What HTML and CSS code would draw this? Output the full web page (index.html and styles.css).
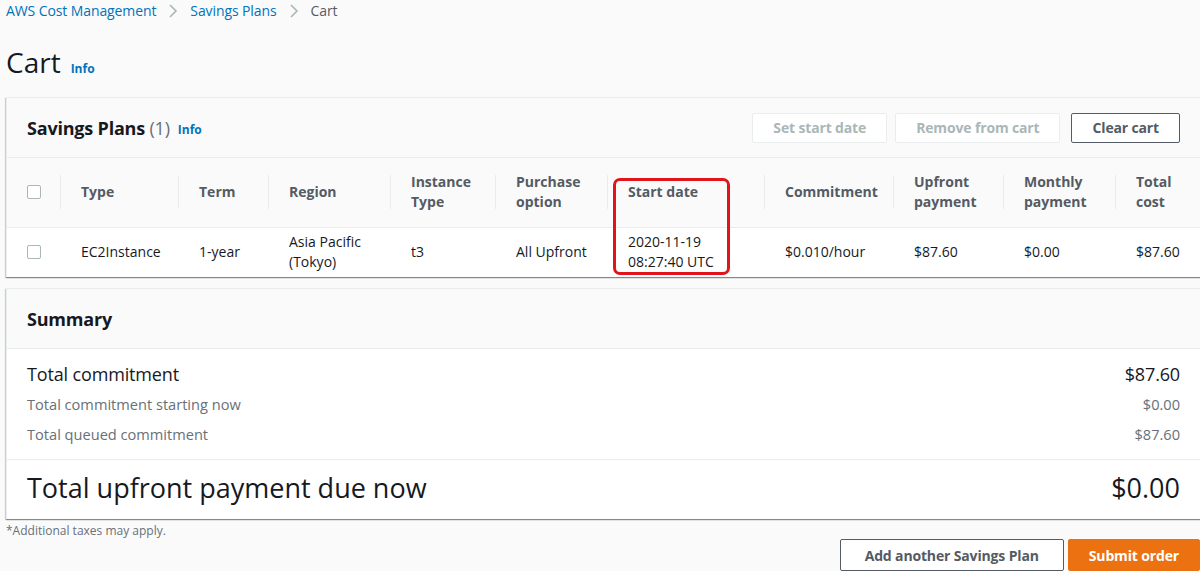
FILE: index.html
```html
<!DOCTYPE html>
<html lang="en">

<head>
    <meta charset="UTF-8">
    <meta name="viewport" content="width=device-width, initial-scale=1.0">
    <title>Cart</title>
    <link rel="stylesheet" href="styles.css">
</head>

<body>
    <main class="page">
        <nav class="breadcrumb">
            <a href="#">AWS Cost Management</a>
            <span class="crumb-sep">
                <svg width="16" height="16" viewBox="0 0 16 16"><path d="M5 2l6 6-6 6" /></svg>
            </span>
            <a href="#">Savings Plans</a>
            <span class="crumb-sep">
                <svg width="16" height="16" viewBox="0 0 16 16"><path d="M5 2l6 6-6 6" /></svg>
            </span>
            <span class="crumb-current">Cart</span>
        </nav>

        <div class="page-title">
            <h1>Cart</h1>
            <a href="#" class="info">Info</a>
        </div>

        <section class="card">
            <div class="card-header">
                <h2>Savings Plans <span class="count">(1)</span></h2>
                <a href="#" class="info">Info</a>
                <div class="actions">
                    <button class="btn" disabled>Set start date</button>
                    <button class="btn" disabled>Remove from cart</button>
                    <button class="btn btn-clear">Clear cart</button>
                </div>
            </div>

            <div class="table-wrap">
                <table class="cart-table">
                    <colgroup>
                        <col style="width: 53px">
                        <col style="width: 118px">
                        <col style="width: 90px">
                        <col style="width: 122px">
                        <col style="width: 105px">
                        <col style="width: 112px">
                        <col style="width: 157px">
                        <col style="width: 129px">
                        <col style="width: 110px">
                        <col style="width: 112px">
                        <col>
                    </colgroup>
                    <thead>
                        <tr>
                            <th><span class="checkbox"></span></th>
                            <th>Type</th>
                            <th>Term</th>
                            <th>Region</th>
                            <th>Instance Type</th>
                            <th>Purchase option</th>
                            <th>Start date</th>
                            <th>Commitment</th>
                            <th>Upfront payment</th>
                            <th>Monthly payment</th>
                            <th>Total cost</th>
                        </tr>
                    </thead>
                    <tbody>
                        <tr>
                            <td><span class="checkbox"></span></td>
                            <td>EC2Instance</td>
                            <td>1-year</td>
                            <td>Asia Pacific (Tokyo)</td>
                            <td>t3</td>
                            <td>All Upfront</td>
                            <td>2020-11-19 08:27:40 UTC</td>
                            <td>$0.010/hour</td>
                            <td>$87.60</td>
                            <td>$0.00</td>
                            <td>$87.60</td>
                        </tr>
                    </tbody>
                </table>
                <div class="highlight"></div>
            </div>
        </section>

        <section class="card summary">
            <div class="card-header">
                <h2>Summary</h2>
            </div>
            <div class="summary-body">
                <div class="summary-row main">
                    <span>Total commitment</span>
                    <span>$87.60</span>
                </div>
                <div class="summary-sub">
                    <div class="summary-row sub">
                        <span>Total commitment starting now</span>
                        <span>$0.00</span>
                    </div>
                    <div class="summary-row sub">
                        <span>Total queued commitment</span>
                        <span>$87.60</span>
                    </div>
                </div>
            </div>
            <div class="summary-total">
                <span>Total upfront payment due now</span>
                <span>$0.00</span>
            </div>
        </section>

        <p class="note">*Additional taxes may apply.</p>

        <div class="footer-actions">
            <button class="btn btn-normal">Add another Savings Plan</button>
            <button class="btn btn-primary">Submit order</button>
        </div>
    </main>
</body>

</html>
```

FILE: styles.css
```css
:root {
    --text: #16191f;
    --text-label: #545b64;
    --text-secondary: #687078;
    --disabled: #aab7b8;
    --border: #eaeded;
    --link: #0073bb;
    --orange: #ec7211;
    --bg: #fafafa;
}

* {
    box-sizing: border-box;
}

html {
    font-family: "Open Sans", "Noto Sans", sans-serif;
    font-size: 14px;
    line-height: 20px;
    color: var(--text);
}

body {
    margin: 0;
    height: 571px;
    overflow: hidden;
    background-color: var(--bg);
}

.page {
    padding-left: 6px;
}

a {
    text-decoration: none;
}

/* breadcrumb */

.breadcrumb {
    display: flex;
    align-items: center;
    height: 22px;
    line-height: 22px;
    letter-spacing: -0.1px;
}

.breadcrumb a {
    color: var(--link);
}

.crumb-sep {
    display: flex;
    width: 34px;
    justify-content: center;
}

.crumb-sep svg {
    fill: none;
    stroke: var(--disabled);
    stroke-width: 1.6;
}

.crumb-current {
    color: var(--text-label);
}

/* title */

.page-title {
    display: flex;
    align-items: baseline;
    gap: 10px;
    margin: 22px 0 17px;
}

.page-title h1 {
    margin: 0;
    font-size: 28px;
    line-height: 36px;
    font-weight: 400;
}

.info {
    font-size: 12px;
    font-weight: 700;
    color: var(--link);
}

/* cards */

.card {
    margin-right: -1px;
    background-color: #fff;
    border: 1px solid var(--border);
    border-bottom: 0;
    box-shadow: 0 1px 1px 0 rgba(0, 28, 36, 0.3), 1px 1px 1px 0 rgba(0, 28, 36, 0.15), -1px 1px 1px 0 rgba(0, 28, 36, 0.15);
}

.card-header {
    display: flex;
    align-items: center;
    gap: 8px;
    height: 60px;
    padding: 0 20px;
    background-color: var(--bg);
    border-bottom: 1px solid var(--border);
}

.card-header h2 {
    margin: 0;
    font-size: 18px;
    line-height: 24px;
    font-weight: 700;
    letter-spacing: -0.2px;
}

.card-header .info {
    margin-top: 4px;
}

.count {
    font-weight: 400;
    color: var(--text-secondary);
}

.actions {
    display: flex;
    gap: 8px;
    margin-left: auto;
}

.actions .btn-clear {
    margin-left: 3px;
}

/* buttons */

.btn {
    height: 30px;
    padding: 0 20px;
    font-family: inherit;
    font-size: 14px;
    font-weight: 700;
    letter-spacing: -0.15px;
    border-radius: 2px;
    border: 1px solid var(--border);
    background-color: #fff;
    color: var(--disabled);
}

.btn-clear,
.btn-normal {
    border-color: var(--text-label);
    color: var(--text-label);
}

.btn-normal {
    padding: 0 24px;
}

.btn-primary {
    border-color: var(--orange);
    background-color: var(--orange);
    color: #fff;
}

/* table */

.table-wrap {
    position: relative;
}

.cart-table {
    width: 100%;
    table-layout: fixed;
    border-collapse: collapse;
}

.cart-table th,
.cart-table td {
    text-align: left;
    vertical-align: middle;
    padding: 0 20px 0 21px;
}

.cart-table th {
    position: relative;
    height: 69px;
    background-color: var(--bg);
    font-weight: 700;
    color: var(--text-label);
}

.cart-table th + th::before {
    content: '';
    position: absolute;
    left: 0;
    top: 17px;
    bottom: 18px;
    width: 1px;
    background-color: var(--border);
}

.cart-table td {
    height: 50px;
    border-top: 1px solid var(--border);
}

.cart-table th:first-child,
.cart-table td:first-child {
    padding-left: 20px;
}

.checkbox {
    display: block;
    width: 14px;
    height: 14px;
    border: 1px solid var(--disabled);
    border-radius: 2px;
    background-color: #fff;
}

.highlight {
    position: absolute;
    left: 606px;
    top: 20px;
    width: 117px;
    height: 97px;
    border: 3px solid #e3131c;
    border-radius: 7px;
}

/* summary */

.summary {
    margin-top: 11px;
}

.summary-body {
    padding: 13px 20px 10px;
    border-bottom: 1px solid var(--border);
}

.summary-row {
    display: flex;
    justify-content: space-between;
}

.summary-row.main {
    font-size: 18px;
    line-height: 24px;
    letter-spacing: -0.15px;
}

.summary-sub {
    padding-top: 3px;
}

.summary-row.sub {
    font-size: 14.6px;
    line-height: 30px;
    color: var(--text-secondary);
}

.summary-total {
    display: flex;
    justify-content: space-between;
    padding: 10px 20px 13px;
    font-size: 27px;
    line-height: 36px;
}

.note {
    margin: 4px 0 0;
    font-size: 12px;
    line-height: 16px;
    color: var(--text-secondary);
}

.footer-actions {
    display: flex;
    justify-content: flex-end;
    gap: 4px;
}

.footer-actions .btn {
    height: 32px;
}
```
